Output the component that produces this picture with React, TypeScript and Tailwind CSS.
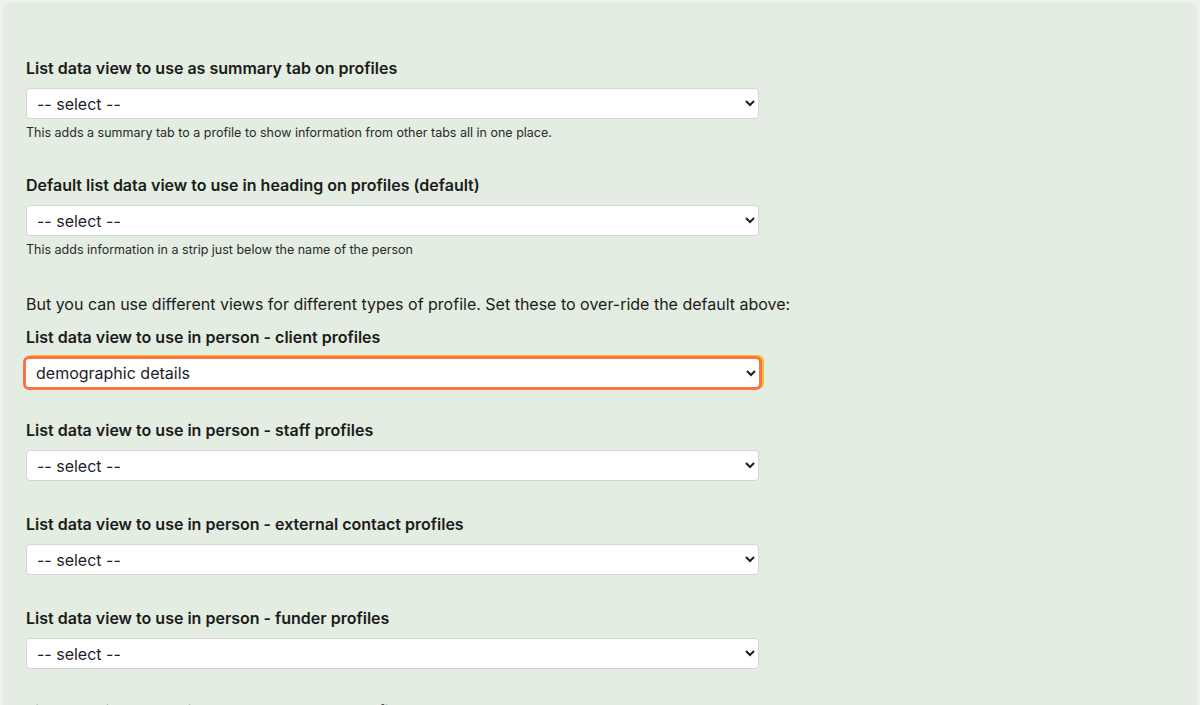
const font = { fontFamily: "Inter, 'Noto Sans', sans-serif" };

type Field = {
  label: string;
  value: string;
  help?: string;
  focused?: boolean;
};

function SelectField({ label, value, help, focused }: Field) {
  return (
    <div>
      <label className="block text-[16px] font-semibold leading-5 text-[#1b1b1b]">{label}</label>
      <div className={focused ? "mt-[9px]" : "mt-[10px]"}>
        <select
          defaultValue={value}
          className={
            focused
              ? "w-[739px] h-[34px] -ml-[3px] px-[6px] text-[16px] text-[#1d1d2b] bg-white rounded-[6px] border-[3px] border-[#ff7043] shadow-[2px_-1px_0_#fbc02d] outline-none"
              : "w-[733px] h-[31px] px-[6px] text-[16px] text-[#1d1d2b] bg-white rounded-[4px] border border-[#d4d6d4] outline-none"
          }
        >
          <option>{value}</option>
        </select>
      </div>
      {help && <p className="mt-[6px] text-[12.5px] leading-4 text-[#2a2a2a]">{help}</p>}
    </div>
  );
}

export default function App() {
  return (
    <div className="h-[705px] w-[1200px] overflow-hidden bg-[#f1f1f1] pt-[2px] px-[3px]" style={font}>
      <div className="h-[720px] rounded-[8px] bg-[#e3ede1] px-[23px] pt-[56px]">
        <SelectField
          label="List data view to use as summary tab on profiles"
          value="-- select --"
          help="This adds a summary tab to a profile to show information from other tabs all in one place."
        />
        <div className="mt-[34px]">
          <SelectField
            label="Default list data view to use in heading on profiles (default)"
            value="-- select --"
            help="This adds information in a strip just below the name of the person"
          />
        </div>
        <p className="mt-[36px] text-[16px] leading-5 text-[#1b1b1b]">
          But you can use different views for different types of profile. Set these to over-ride the default above:
        </p>
        <div className="mt-[13px]">
          <SelectField label="List data view to use in person - client profiles" value="demographic details" focused />
        </div>
        <div className="mt-[30px]">
          <SelectField label="List data view to use in person - staff profiles" value="-- select --" />
        </div>
        <div className="mt-[33px]">
          <SelectField label="List data view to use in person - external contact profiles" value="-- select --" />
        </div>
        <div className="mt-[33px]">
          <SelectField label="List data view to use in person - funder profiles" value="-- select --" />
        </div>
        <div className="mt-[32px]">
          <SelectField label="List data view to use in person - volunteer profiles" value="-- select --" />
        </div>
      </div>
    </div>
  );
}
